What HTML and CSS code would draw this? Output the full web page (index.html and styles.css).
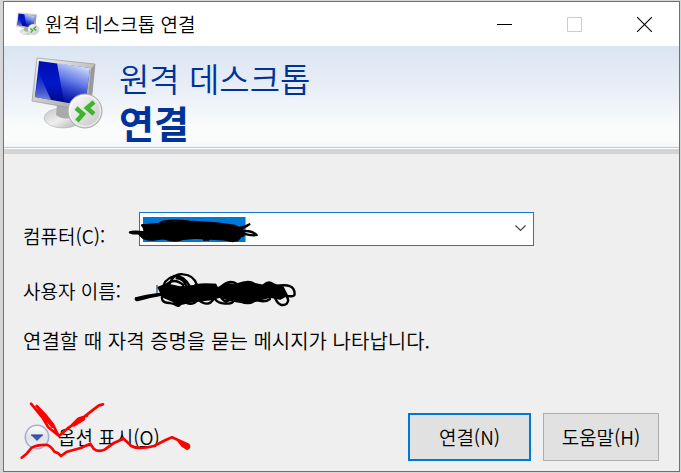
FILE: index.html
```html
<!DOCTYPE html>
<html lang="ko">
<head>
    <meta charset="utf-8">
    <title>원격 데스크톱 연결</title>
    <link rel="stylesheet" href="styles.css">
</head>
<body>

<div class="window">
    <!-- Title bar -->
    <header class="titlebar">
        <svg class="titlebar-icon" viewBox="0 0 72 74" aria-hidden="true"><use href="#rdp-icon"/></svg>
        <span class="titlebar-text">원격 데스크톱 연결</span>
        <button class="window-button" type="button" aria-label="최소화">
            <svg width="15" height="15" viewBox="0 0 15 15"><path d="M0 7.5H15" stroke="#000"/></svg>
        </button>
        <button class="window-button" type="button" aria-label="최대화" disabled>
            <svg width="15" height="15" viewBox="0 0 15 15"><path d="M.5.5h14v14H.5z" fill="none" stroke="#ccc"/></svg>
        </button>
        <button class="window-button" type="button" aria-label="닫기">
            <svg width="15" height="15" viewBox="0 0 15 15"><path d="M0 0 15 15M15 0 0 15" stroke="#000" stroke-width="1.1"/></svg>
        </button>
    </header>

    <!-- Banner -->
    <div class="banner">
        <svg class="banner-icon" viewBox="0 0 72 74" aria-hidden="true">
            <defs>
                <linearGradient id="frame" x1="0" y1="0" x2="1" y2="1">
                    <stop offset="0" stop-color="#f4f4f4"/>
                    <stop offset="1" stop-color="#999"/>
                </linearGradient>
                <linearGradient id="screen" x1="0" y1="0" x2="0" y2="1">
                    <stop offset="0" stop-color="#0010b0"/>
                    <stop offset=".5" stop-color="#0018c8"/>
                    <stop offset="1" stop-color="#00067c"/>
                </linearGradient>
                <linearGradient id="shine" x1=".6" y1="0" x2=".3" y2="1">
                    <stop offset="0" stop-color="#e4eeff" stop-opacity=".95"/>
                    <stop offset=".4" stop-color="#8ba3f4" stop-opacity=".75"/>
                    <stop offset="1" stop-color="#0618c0" stop-opacity=".2"/>
                </linearGradient>
                <linearGradient id="glow" x1="0" y1="0" x2="0" y2="1">
                    <stop offset="0" stop-color="#2440d0" stop-opacity=".2"/>
                    <stop offset="1" stop-color="#8fa2f0" stop-opacity=".8"/>
                </linearGradient>
                <linearGradient id="stand" x1="0" y1="0" x2="1" y2="1">
                    <stop offset="0" stop-color="#c4c4c4"/>
                    <stop offset=".5" stop-color="#eee"/>
                    <stop offset="1" stop-color="#aaa"/>
                </linearGradient>
                <linearGradient id="disc" x1="0" y1="0" x2="1" y2="1">
                    <stop offset="0" stop-color="#fff"/>
                    <stop offset="1" stop-color="#c4c4c4"/>
                </linearGradient>
            </defs>
            <g id="rdp-icon">
                <ellipse cx="32" cy="61" rx="19" ry="10" fill="url(#stand)" stroke="#b4b4b4" stroke-width=".6"/>
                <path d="M26 47 46 51 42 60Q33 64 25 58Z" fill="#aaa"/>
                <path d="M6 1 64 7 61 37 56 54 1 44Z" fill="url(#frame)" stroke="#999" stroke-width=".7"/>
                <path d="M64 7 61 37 56 54 60 12Z" fill="#999"/>
                <path d="M8 4 59 11 54 49 4 40Z" fill="url(#screen)"/>
                <path d="M26 6 59 11 54 49 33 45Z" fill="url(#shine)"/>
                <path d="M8 16 20 43 4 40Z" fill="url(#glow)"/>
                <circle cx="54" cy="54" r="17" fill="url(#disc)" stroke="#aaa"/>
                <circle cx="54" cy="54" r="15.5" fill="none" stroke="#fff" opacity=".7"/>
                <path d="M45 51 52 57 46 64M63 45 56 51 63 57" fill="none" stroke="#3cb52d" stroke-width="4.5"/>
            </g>
        </svg>
        <h1 class="banner-title">원격 데스크톱 <strong>연결</strong></h1>
    </div>

    <!-- Connection form -->
    <form class="form">
        <div class="fields">
            <label class="label" for="computer">컴퓨터(C):</label>
            <div class="combo">
                <select id="computer" class="combo-select"><option></option></select>
                <span class="combo-selection"></span>
                <svg class="combo-arrow" width="11" height="7" viewBox="0 0 11 7"><path d="M.5.5 5.5 5.5 10.5.5" fill="none" stroke="#444" stroke-width="1.2"/></svg>
                <svg class="scribble scribble-computer" viewBox="15 51 405 78">
                    <path d="M68 76 120 72 150 70 220 66 290 70 345 78 350 92 372 98 352 121 310 118 260 115 200 112 160 118 110 112 70 114 58 102 76 94Z" fill="#000"/>
                    <path d="M66 76H120M120 70Q125 62 165 62T210 66M110 76Q160 66 210 72M30 97Q40 92 80 98T120 104M30 97Q45 103 70 98M62 105Q75 123 110 117T180 112M135 115Q165 128 190 116M160 121Q210 114 240 113M252 119H265M345 80Q355 96 388 73M350 84Q375 82 386 74M350 97Q390 86 410 105Q398 109 370 101M310 116Q340 128 348 120M350 80Q380 96 368 108"/>
                </svg>
            </div>

            <span class="label">사용자 이름:</span>
            <div class="user-name">
                <svg class="scribble scribble-user" viewBox="36 213 501 114">
                    <path d="M111 256V289" stroke="#002a60" stroke-width="3"/>
                    <path d="M116 263 140 254 180 262 230 258 286 254 292 266 320 252 345 256 385 248 430 258 450 250 488 262 500 285 480 296 450 290 415 300 375 308 330 300 300 290 270 298 225 302 180 312 130 290Z" fill="#000"/>
                    <path d="M48 295Q45 302 58 299Q90 290 125 284M48 295Q75 288 120 282M128 270Q130 238 162 228Q190 225 208 257M145 266Q155 218 190 223Q220 225 230 253M138 256Q160 230 190 255M170 235Q190 234 200 260M128 280Q118 310 150 309Q180 320 190 300M160 310Q180 328 182 304M190 300Q210 324 235 299Q265 325 282 295M220 303Q265 300 279 276M225 256Q260 250 285 256M288 270Q270 306 315 311Q350 312 335 294M300 265Q325 235 352 253Q390 238 405 254M430 256Q452 236 466 263M462 260Q525 245 524 283Q524 291 500 288M466 296Q480 324 500 311Q509 301 500 290M360 300Q382 319 408 300Q435 309 450 297M297 280Q310 313 329 300"/>
                </svg>
            </div>
        </div>

        <p class="message">연결할 때 자격 증명을 묻는 메시지가 나타납니다.</p>

        <div class="footer">
            <button class="options" type="button">
                <svg class="options-icon" width="26" height="26" viewBox="0 0 26 26">
                    <defs>
                        <linearGradient id="knob" x1="0" y1="0" x2="0" y2="1">
                            <stop offset="0" stop-color="#fff"/>
                            <stop offset=".5" stop-color="#dfe3e5"/>
                            <stop offset="1" stop-color="#f4f6f8"/>
                        </linearGradient>
                    </defs>
                    <circle cx="13" cy="13" r="11.7" fill="url(#knob)" stroke="#a5afd0" stroke-width="1.6"/>
                    <path d="M7 11H19L13 17Z" fill="#3458b8"/>
                    <path d="M7 11H19" stroke="#263b80"/>
                </svg>
                <span>옵션 표시(<u>O</u>)</span>
                <svg class="scribble scribble-options" viewBox="60 30 519 180">
                    <path d="M96 41 130 82 148 112 180 138 210 112 242 91 280 61 300 46 312 43M113 48 142 78 162 104 178 136M118 60 150 98 160 110M212 112 238 86 264 77M225 106 255 87M68 203 83 191 98 173Q116 163 145 165Q156 168 166 185L178 190 186 198 204 185 245 174 274 161 284 176Q298 188 317 179L346 158 374 146 397 168Q418 180 465 168L500 150 519 142 568 164Q574 172 564 176L550 167 538 151 566 170"/>
                </svg>
            </button>
            <button class="button button-default" type="submit">연결(N)</button>
            <button class="button" type="button">도움말(H)</button>
        </div>
    </form>
</div>

</body>
</html>
```

FILE: styles.css
```css
* {
    box-sizing: border-box;
}

body {
    margin: 0;
    padding: 1px 1px 1px 3px;
    background-color: #d6d6d6;
    color: #000;
    font-family: "Noto Sans CJK KR", sans-serif;
    font-size: 19px;
    font-weight: 350;
    line-height: 28px;
}

button,
select {
    font: inherit;
    color: inherit;
}

.window {
    display: flex;
    flex-direction: column;
    min-height: calc(100vh - 2px);
    border: 1px solid #707070;
    background-color: #efefef;
}

/* Title bar */
.titlebar {
    display: flex;
    align-items: center;
    height: 44px;
    padding-left: 12px;
    background-color: #fff;
}

.titlebar-icon {
    width: 23px;
    height: 24px;
    margin-right: 6px;
}

.titlebar-text {
    flex: 1;
}

.window-button {
    display: flex;
    align-items: center;
    justify-content: center;
    width: 70px;
    height: 44px;
    padding: 0;
    border: none;
    background: none;
}

/* Banner */
.banner {
    display: flex;
    align-items: flex-start;
    gap: 16px;
    height: 108px;
    padding: 11px 27px 0;
    background: linear-gradient(#dae5f2, #e8eef7 40%, #fafcfc 78%, #fafcfc 90%, #f2f6fa);
    border-bottom: 5px solid #d4d4d4;
    box-shadow: inset 0 -1px #fff, inset 0 -2px #c8c8cc;
}

.banner-icon {
    width: 72px;
    height: 74px;
}

.banner-title {
    margin: 0;
    color: #039;
    font-size: 33px;
    font-weight: 350;
    line-height: 43px;
}

.banner-title strong {
    display: block;
    font-size: 38px;
    font-weight: 700;
}

/* Form */
.form {
    flex: 1;
    display: flex;
    flex-direction: column;
    padding: 58px 20px 10px 19px;
}

.fields {
    display: grid;
    grid-template-columns: 116px 1fr;
    grid-template-rows: 38px 40px;
    row-gap: 15px;
    margin-right: 125px;
}

.label {
    align-self: end;
    white-space: nowrap;
}

.combo {
    position: relative;
    height: 34px;
}

.combo-select {
    width: 100%;
    height: 100%;
    border: 1px solid #1778cf;
    border-radius: 0;
    background-color: #fff;
    appearance: none;
    outline: none;
}

.combo-selection {
    position: absolute;
    left: 4px;
    top: 5px;
    width: 103px;
    height: 25px;
    background-color: #0078d7;
    border-right: 1px solid #f90;
    pointer-events: none;
}

.combo-arrow {
    position: absolute;
    right: 8px;
    top: 13px;
    pointer-events: none;
}

.user-name {
    position: relative;
}

.message {
    margin: 22px 0 0;
    font-size: 20px;
}

/* Pen marks drawn over the dialog */
.scribble {
    position: absolute;
    fill: none;
    stroke: #000;
    stroke-width: 7px;
    stroke-linecap: round;
    stroke-linejoin: round;
    pointer-events: none;
}

.scribble-computer {
    left: -14px;
    top: 5px;
    width: 135px;
    height: 26px;
}

.scribble-user {
    left: -7px;
    top: 6px;
    width: 167px;
    height: 38px;
}

.scribble-options {
    left: -4px;
    top: -23px;
    width: 173px;
    height: 60px;
    stroke: #f00;
    stroke-width: 8px;
}

/* Footer */
.footer {
    display: flex;
    align-items: center;
    gap: 12px;
    margin-top: auto;
}

.options {
    position: relative;
    display: flex;
    align-items: center;
    gap: 8px;
    margin-right: auto;
    padding: 0 1px;
    border: none;
    background: none;
}

.button {
    width: 116px;
    height: 48px;
    padding: 0;
    border: 1px solid #adadad;
    background-color: #e1e1e1;
}

.button-default {
    width: 123px;
    border: 2px solid #0078d7;
}
```
